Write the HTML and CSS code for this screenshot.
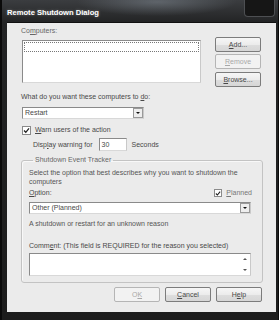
FILE: index.html
```html
<!DOCTYPE html>
<html lang="en">
<head>
    <meta charset="UTF-8">
    <title>Remote Shutdown Dialog</title>
    <link rel="stylesheet" href="styles.css">
</head>
<body>
    <div class="window">
        <div class="titlebar">
            <span class="title">Remote Shutdown Dialog</span>
            <span class="close-box"></span>
        </div>

        <div class="client">
            <div class="label computers-label">Co<u>m</u>puters:</div>

            <div class="computers-row">
                <div class="listbox"><div class="focus-row"></div></div>
                <div class="side-buttons">
                    <div class="btn"><u>A</u>dd...</div>
                    <div class="btn disabled"><u>R</u>emove</div>
                    <div class="btn"><u>B</u>rowse...</div>
                </div>
            </div>

            <div class="label action-label">What do you want these computers to <u>d</u>o:</div>
            <div class="combo action-combo">
                <span class="combo-text">Restart</span>
                <span class="combo-arrow"></span>
            </div>

            <div class="check-row warn-row">
                <span class="checkbox"><svg width="7" height="7" viewBox="0 0 7 7"><path d="M1 3.5 L2.8 5.3 L6 1.4" fill="none" stroke="#222" stroke-width="1.3"/></svg></span>
                <span class="label"><u>W</u>arn users of the action</span>
            </div>

            <div class="display-row">
                <span class="label">Disp<u>l</u>ay warning for</span>
                <span class="edit seconds-edit">30</span>
                <span class="label">Seconds</span>
            </div>

            <fieldset class="tracker">
                <legend class="label">Shutdown Event Tracker</legend>
                <p class="label tracker-text">Select the option that best describes why you want to shutdown the<br>computers</p>

                <div class="option-row">
                    <span class="label"><u>O</u>ption:</span>
                    <span class="check-row planned">
                        <span class="checkbox"><svg width="7" height="7" viewBox="0 0 7 7"><path d="M1 3.5 L2.8 5.3 L6 1.4" fill="none" stroke="#222" stroke-width="1.3"/></svg></span>
                        <span class="label disabled-text"><u>P</u>lanned</span>
                    </span>
                </div>
                <div class="combo option-combo">
                    <span class="combo-text">Other (Planned)</span>
                    <span class="combo-arrow"></span>
                </div>

                <div class="label reason">A shutdown or restart for an unknown reason</div>

                <div class="label comment-label">Comm<u>e</u>nt: (This field is REQUIRED for the reason you selected)</div>
                <div class="comment-box">
                    <div class="scroll-arrows">
                        <span class="arrow-up"></span>
                        <span class="arrow-down"></span>
                    </div>
                </div>
            </fieldset>

            <div class="bottom-buttons">
                <div class="btn disabled">O<u>K</u></div>
                <div class="btn"><u>C</u>ancel</div>
                <div class="btn">H<u>e</u>lp</div>
            </div>
        </div>
    </div>
</body>
</html>
```

FILE: styles.css
```css
body {
    margin: 0;
    padding: 0;
    background: #000;
    font-family: "Liberation Sans", Arial, sans-serif;
}

.window {
    width: 279px;
    height: 320px;
    box-sizing: border-box;
    padding: 0 3px 0 7px;
    background: linear-gradient(180deg, #3b3d40 0px, #232425 22px, #1c1c1c 100%);
    box-shadow: inset 2px 0 0 #0a0a0a, inset -1px 0 0 #0a0a0a;
}

.titlebar {
    height: 22px;
    display: flex;
    align-items: flex-start;
    background: radial-gradient(ellipse 80px 14px at 150px 2px, rgba(140, 150, 160, 0.45), rgba(140, 150, 160, 0) 100%);
}

.title {
    margin-top: 8px;
    color: #fff;
    font-weight: bold;
    font-size: 7.6px;
    line-height: 10px;
    text-shadow: 0 0 3px rgba(255, 255, 255, 0.35);
}

.close-box {
    margin-left: auto;
    margin-right: 1px;
    width: 31px;
    height: 17px;
    box-sizing: border-box;
    border: 1px solid #4d4f52;
    border-top: none;
    border-radius: 0 0 4px 4px;
    background: #161616;
}

.client {
    height: 290px;
    box-sizing: border-box;
    background: #ebebeb;
    padding: 3px 15px 0 14px;
    border-top: 1px solid #111;
}

.label {
    font-size: 7px;
    line-height: 10px;
    color: #484848;
    white-space: nowrap;
}

.label u {
    text-underline-offset: 1px;
}

.computers-label {
    color: #666;
}

.computers-row {
    display: flex;
    justify-content: space-between;
    margin-top: 1px;
}

.listbox {
    margin-top: 3px;
    margin-left: 1px;
    width: 179px;
    height: 43px;
    box-sizing: border-box;
    background: #fff;
    border: 1px solid #8a8a8a;
    border-right-color: #c9c9c9;
    border-bottom-color: #d8d8d8;
    padding: 1px;
}

.focus-row {
    height: 8px;
    border: 1px dotted #777;
}

.side-buttons {
    display: flex;
    flex-direction: column;
    gap: 2px;
}

.side-buttons .btn:last-child {
    margin-top: 1px;
}

.btn {
    width: 46px;
    height: 15px;
    box-sizing: border-box;
    display: flex;
    align-items: center;
    justify-content: center;
    font-size: 7px;
    color: #484848;
    border: 1px solid #7c7c7c;
    border-radius: 2px;
    background: linear-gradient(180deg, #f6f6f6 0%, #ececec 50%, #dedede 51%, #d6d6d6 100%);
}

.btn.disabled {
    color: #a8a8a8;
    border-color: #b5b5b5;
    background: #f2f2f2;
}

.action-label {
    margin-top: 5px;
}

.combo {
    display: flex;
    align-items: center;
    height: 12px;
    box-sizing: border-box;
    background: #fff;
    border: 1px solid #8a8a8a;
    border-right-color: #c9c9c9;
    border-bottom-color: #d8d8d8;
}

.action-combo {
    margin-top: 5px;
    margin-left: 1px;
    width: 122px;
}

.combo-text {
    flex: 1;
    padding-left: 2px;
    font-size: 7px;
    line-height: 10px;
    color: #484848;
}

.combo-arrow {
    width: 10px;
    height: 10px;
    box-sizing: border-box;
    border: 1px solid #9a9a9a;
    background: #eeeeee;
    display: flex;
    align-items: center;
    justify-content: center;
}

.combo-arrow::after,
.arrow-down::after {
    content: "";
    border-left: 2px solid transparent;
    border-right: 2px solid transparent;
    border-top: 2px solid #111;
}

.check-row {
    display: flex;
    align-items: center;
    gap: 4px;
}

.warn-row {
    margin-top: 6px;
    margin-left: 1px;
}

.checkbox {
    width: 9px;
    height: 9px;
    box-sizing: border-box;
    border: 1px solid #8a8a8a;
    background: #fff;
    display: flex;
    align-items: center;
    justify-content: center;
}

.display-row {
    display: flex;
    align-items: center;
    margin-top: 3px;
    padding-left: 12px;
}

.edit {
    height: 13px;
    box-sizing: border-box;
    background: #fff;
    border: 1px solid #8a8a8a;
    border-right-color: #c9c9c9;
    border-bottom-color: #d8d8d8;
    font-size: 7px;
    line-height: 11px;
    color: #484848;
    padding-left: 2px;
}

.seconds-edit {
    width: 28px;
    margin: 0 5px 0 6px;
}

.tracker {
    margin: 4px 0 0 0;
    padding: 0 10px 6px 7px;
    width: 242px;
    box-sizing: border-box;
    border: 1px solid #c3c3c3;
    border-radius: 3px;
    box-shadow: inset 1px 1px 0 #f8f8f8;
}

.tracker legend {
    padding: 0 2px;
    margin-left: 4px;
    color: #666;
}

.tracker-text {
    margin: 3px 0 0 0;
    line-height: 9px;
    color: #555;
}

.option-row {
    display: flex;
    justify-content: space-between;
    align-items: center;
    margin-top: 2px;
}

.planned .checkbox {
    width: 8px;
    height: 8px;
}

.disabled-text {
    color: #777;
}

.option-combo {
    margin-top: 4px;
    width: 222px;
}

.reason {
    margin-top: 5px;
    color: #555;
}

.comment-label {
    margin-top: 12px;
}

.comment-box {
    margin-top: 2px;
    width: 222px;
    height: 23px;
    box-sizing: border-box;
    background: #fff;
    border: 1px solid #8a8a8a;
    border-right-color: #c9c9c9;
    border-bottom-color: #d8d8d8;
    display: flex;
    justify-content: flex-end;
}

.scroll-arrows {
    width: 10px;
    display: flex;
    flex-direction: column;
    justify-content: space-around;
    align-items: center;
}

.arrow-up::after {
    content: "";
    display: block;
    border-left: 2px solid transparent;
    border-right: 2px solid transparent;
    border-bottom: 2px solid #555;
}

.arrow-down::after {
    display: block;
    border-top-color: #555;
}

.bottom-buttons {
    display: flex;
    justify-content: flex-end;
    gap: 5px;
    margin-top: 4px;
    margin-right: -1px;
}
```
